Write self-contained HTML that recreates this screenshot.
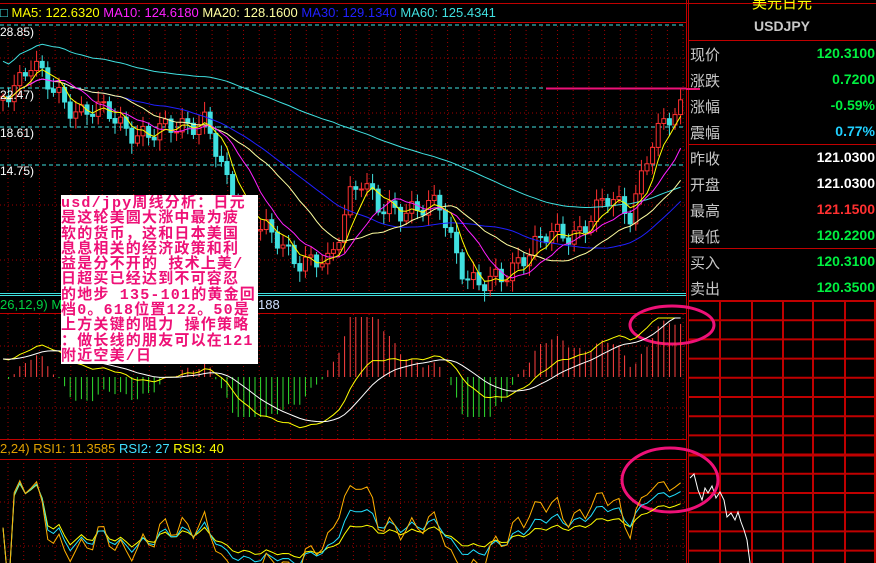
<!DOCTYPE html>
<html><head><meta charset="utf-8"><style>
html,body{margin:0;padding:0;background:#000;}
body{width:876px;height:563px;overflow:hidden;position:relative;font-family:"Liberation Sans","Noto Sans CJK SC",sans-serif;}
svg{position:absolute;left:0;top:0;}
.t{position:absolute;white-space:nowrap;}
#box{position:absolute;left:61px;top:195px;width:197px;height:168px;background:#fff;color:#ee1177;font-family:"Liberation Mono","WenQuanYi Zen Hei","Noto Sans CJK SC",monospace;font-size:15px;line-height:15.3px;font-weight:bold;letter-spacing:1.2px;white-space:nowrap;overflow:hidden;padding-top:1px;}
.lab{position:absolute;left:690px;color:#c8c8c8;font-size:15px;font-family:"WenQuanYi Zen Hei","Noto Sans CJK SC",sans-serif;}
.val{position:absolute;right:1px;font-size:14px;font-weight:bold;font-family:"Liberation Sans",sans-serif;}
</style></head><body>
<svg id="s" width="876" height="563" xmlns="http://www.w3.org/2000/svg">
<defs><clipPath id="cm"><rect x="0" y="314" width="686" height="125"/></clipPath><clipPath id="cr"><rect x="0" y="460" width="686" height="103"/></clipPath></defs>
<g id="grid"></g>
<g id="plot"></g>
<g id="macd" clip-path="url(#cm)"></g>
<g id="rsi" clip-path="url(#cr)"></g>
</svg>

<div class="t" style="left:0;top:4px;font-size:13px;line-height:18px;">
<span style="color:#40e0e0">□</span> <span style="color:#ffff00">MA5: 122.6320</span> <span style="color:#ff20ff">MA10: 124.6180</span> <span style="color:#ffffa0">MA20: 128.1600</span> <span style="color:#2020ff">MA30: 129.1340</span> <span style="color:#40e0e0">MA60: 125.4341</span></div>
<div class="t" style="left:0;top:25px;color:#fff;font-size:12px">28.85)</div>
<div class="t" style="left:0;top:88px;color:#fff;font-size:12px">22.47)</div>
<div class="t" style="left:0;top:126px;color:#fff;font-size:12px">18.61)</div>
<div class="t" style="left:0;top:164px;color:#fff;font-size:12px">14.75)</div>
<div class="t" style="left:0;top:297px;color:#00d040;font-size:13px">26,12,9) MA</div>
<div class="t" style="left:258px;top:297px;color:#d0e0ff;font-size:13px">188</div>
<div class="t" style="left:0;top:441px;font-size:13px"><span style="color:#e0a000">2,24) RSI1: 11.3585</span> <span style="color:#40e0ff">RSI2: 27</span> <span style="color:#ffff00">RSI3: 40</span></div>

<div id="box">usd/jpy周线分析：日元<br>是这轮美圆大涨中最为疲<br>软的货币，这和日本美国<br>息息相关的经济政策和利<br>益是分不开的 技术上美/<br>日超买已经达到不可容忍<br>的地步 135-101的黄金回<br>档0。618位置122。50是<br>上方关键的阻力 操作策略<br>：做长线的朋友可以在121<br>附近空美/日</div>

<div class="t" style="left:752px;top:-8px;color:#ffff00;font-size:15px;font-family:'WenQuanYi Zen Hei','Noto Sans CJK SC',sans-serif">美元日元</div>
<div class="t" style="left:754px;top:18px;color:#c8c8c8;font-size:14px;font-weight:bold">USDJPY</div>
<div class="lab" style="top:44px">现价</div><div class="val" style="top:45px;color:#00f040">120.3100</div>
<div class="lab" style="top:70px">涨跌</div><div class="val" style="top:71px;color:#00f040">0.7200</div>
<div class="lab" style="top:96px">涨幅</div><div class="val" style="top:97px;color:#00f040">-0.59%</div>
<div class="lab" style="top:122px">震幅</div><div class="val" style="top:123px;color:#20d0ff">0.77%</div>
<div class="lab" style="top:148px">昨收</div><div class="val" style="top:149px;color:#fff">121.0300</div>
<div class="lab" style="top:174px">开盘</div><div class="val" style="top:175px;color:#fff">121.0300</div>
<div class="lab" style="top:200px">最高</div><div class="val" style="top:201px;color:#ff3030">121.1500</div>
<div class="lab" style="top:226px">最低</div><div class="val" style="top:227px;color:#00f040">120.2200</div>
<div class="lab" style="top:252px">买入</div><div class="val" style="top:253px;color:#00f040">120.3100</div>
<div class="lab" style="top:278px">卖出</div><div class="val" style="top:279px;color:#00f040">120.3500</div>

<script>
var NS="http://www.w3.org/2000/svg";
var G=document.getElementById('grid'),P=document.getElementById('plot'),M=document.getElementById('macd'),R=document.getElementById('rsi');
function el(par,tag,a){var e=document.createElementNS(NS,tag);for(var k in a)e.setAttribute(k,a[k]);par.appendChild(e);return e;}
function line(par,x1,y1,x2,y2,c,w,d){var a={x1:x1,y1:y1,x2:x2,y2:y2,stroke:c,'stroke-width':w||1};if(d)a['stroke-dasharray']=d;el(par,'line',a);}
function poly(par,pts,c,w){el(par,'polyline',{points:pts.map(function(p){return p[0].toFixed(1)+','+p[1].toFixed(1)}).join(' '),fill:'none',stroke:c,'stroke-width':w||1});}
for(var x=8;x<686;x+=15.7){line(G,x,22,x,294,'#a00000',1,'1,3');line(G,x,314,x,439,'#a00000',1,'1,3');line(G,x,459,x,563,'#a00000',1,'1,3');}
[58,113,150,205,260].forEach(function(y){line(G,0,y,686,y,'#a00000',1,'1,3');});
[25,88,127,165].forEach(function(y){line(G,0,y,686,y,'#40e0e0',1,'4,3');});
[346,408].forEach(function(y){line(G,0,y,686,y,'#a00000',1,'1,3');});
[502,546].forEach(function(y){line(G,0,y,686,y,'#a00000',1,'1,3');});
line(G,0,3.5,876,3.5,'#c00000',1);line(G,0,22.5,686,22.5,'#c00000',1);
line(G,0,293.5,686,293.5,'#40e0e0',1);line(G,0,295.5,686,295.5,'#40e0e0',1);
line(G,0,313.5,686,313.5,'#c00000',1);line(G,0,439.5,686,439.5,'#c00000',1);line(G,0,459.5,686,459.5,'#c00000',1);
line(G,686.5,0,686.5,563,'#c00000',1);line(G,688.5,0,688.5,563,'#c00000',1);
[40.5,144.5,248.5].forEach(function(y){line(G,688,y,876,y,'#c00000',1);});
line(G,546,88.5,686,88.5,'#ee1177',2);line(G,686,89,700,89,'#ee1177',2);
for(var y=301;y<563;y+=19.2){line(G,688,y,876,y,'#c00000',2);}
line(G,688,455,876,455,'#c00000',3);
[720,752,783,813,845,875].forEach(function(x){line(G,x,300,x,563,'#c00000',2);});
var K=[[0,100],[20,75],[30,62],[50,90],[80,110],[110,115],[150,140],[180,120],[205,125],[230,190],[260,230],[300,258],[330,268],[350,190],[360,175],[380,215],[410,205],[440,210],[460,262],[480,287],[500,282],[520,255],[545,240],[580,228],[610,200],[630,210],[650,150],[670,118],[684,100]];
function f(x){for(var i=1;i<K.length;i++){if(x<=K[i][0]){var a=K[i-1],b=K[i],t=(x-a[0])/(b[0]-a[0]);return a[1]+(b[1]-a[1])*t;}}return K[K.length-1][1];}
var C=[],X=[],st=5.6;
for(var i=0,x=3;x<685;x+=st,i++){X.push(x);C.push(f(x)+Math.sin(i*1.7)*9+Math.sin(i*0.63)*6);}
var N=C.length;
for(var i=0;i<N;i++){var o=i?C[i-1]:C[i]+4,c=C[i],up=c<o,col=up?'#ff3030':'#40e0e0';
var hi=Math.min(o,c)-3-Math.abs(Math.sin(i*2.3))*8,lo=Math.max(o,c)+3+Math.abs(Math.cos(i*1.9))*8;
line(P,X[i],hi,X[i],lo,col,1);
el(P,'rect',{x:X[i]-2,y:Math.min(o,c),width:4,height:Math.max(1,Math.abs(c-o)),fill:up?'#000':col,stroke:col,'stroke-width':1});}
function ma(n){var r=[];for(var i=0;i<N;i++){var s=0,k=0;for(var j=Math.max(0,i-n+1);j<=i;j++){s+=C[j];k++;}r.push([X[i],s/k]);}return r;}
poly(P,ma(60).map(function(p,i){return [p[0],p[1]-35+i*0.05]}),'#40e0e0');
poly(P,ma(30),'#2020ff');poly(P,ma(20),'#ffffa0');poly(P,ma(10),'#ff20ff');poly(P,ma(5),'#ffff00');
var pr=C.map(function(v){return -v;});
function ema(a,n){var r=[],k=2/(n+1);a.forEach(function(v,i){r.push(i?r[i-1]+k*(v-r[i-1]):v);});return r;}
var e12=ema(pr,12),e26=ema(pr,26),dif=e12.map(function(v,i){return v-e26[i]}),dea=ema(dif,9);
var z=377,sc=2.0;
function ly(v){return Math.max(318,Math.min(436,z-18-v*sc));}
for(var i=0;i<N;i++){var h=(dif[i]-dea[i])*3*sc;h=Math.max(-40,Math.min(60,h));line(M,X[i],z,X[i],z-h,h>0?'#ff4040':'#30e030',1);}
poly(M,dif.map(function(v,i){return [X[i],ly(v)]}),'#ffff00');
poly(M,dea.map(function(v,i){return [X[i],ly(v)]}),'#ffffff');
function rsi(n){var r=[],g=0,l=0;for(var i=0;i<N;i++){var d=i?pr[i]-pr[i-1]:0;g=(g*(n-1)+Math.max(d,0))/n;l=(l*(n-1)+Math.max(-d,0))/n;r.push(l+g?100*g/(g+l):50);}return r;}
[[24,'#ffff00'],[12,'#20e0ff'],[6,'#ffb000']].forEach(function(q){poly(R,rsi(q[0]).map(function(v,i){return [X[i],590-v*1.25]}),q[1]);});
var W=[[690,478],[694,474],[698,490],[702,500],[705,488],[708,493],[712,486],[716,498],[720,492],[724,500],[727,517],[731,513],[735,520],[738,512],[741,522],[744,530],[747,540],[750,563]];
poly(P,W,'#ffffff');
el(P,'ellipse',{cx:672,cy:325,rx:42,ry:19,fill:'none',stroke:'#ee1177','stroke-width':3});
el(P,'ellipse',{cx:670,cy:480,rx:48,ry:32,fill:'none',stroke:'#ee1177','stroke-width':3});
</script>
</body></html>
